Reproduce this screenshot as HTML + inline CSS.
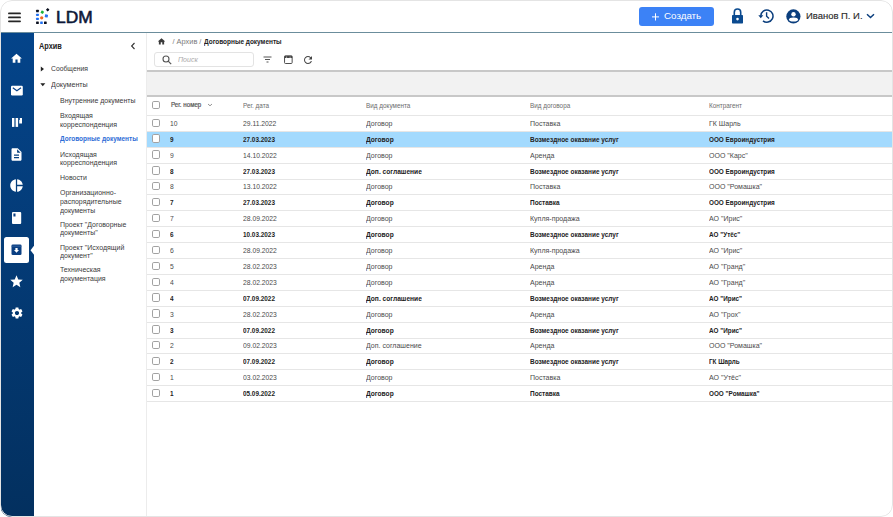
<!DOCTYPE html>
<html><head><meta charset="utf-8">
<style>
*{box-sizing:border-box;margin:0;padding:0}
html,body{width:893px;height:517px;overflow:hidden;background:#fff;font-family:"Liberation Sans",sans-serif;color:#222}
.frame{position:absolute;left:0;top:0;width:893px;height:517px;border-radius:12px;overflow:hidden;background:#fff}
.fb{position:absolute;left:0;top:0;width:893px;height:517px;border:1px solid #e4e4e4;border-radius:12px;pointer-events:none}
.abs{position:absolute;white-space:nowrap}
.hdr{position:absolute;left:0;top:0;width:893px;height:33px;border-bottom:1px solid #6b8d9c;background:#fff}
.side{position:absolute;left:1px;top:33px;width:32.5px;height:484px;background:linear-gradient(#04448a,#03305f)}
.panel{position:absolute;left:33.5px;top:33px;width:113.5px;height:484px;border-right:1px solid #ececec;background:#fff}
.t{position:absolute;white-space:nowrap;font-size:8px;line-height:8.7px;color:#3a3a3a;transform-origin:0 0;transform:scaleX(.87)}
.grayband{position:absolute;left:147px;top:69.8px;width:746px;height:26.8px;background:#f2f2f2;border-top:2px solid #c8c8c8;border-bottom:2.2px solid #c8c8c8}
.row{position:absolute;left:147px;width:746px;height:15.9px;border-top:1px solid #e6e6e6}
.row.last{height:16.9px;border-bottom:1px solid #e6e6e6}
.row.sel{background:#a3dafe}
.cb{position:absolute;left:4.5px;top:2.7px;width:8.3px;height:8.3px;border:1.15px solid #a2a2a2;border-radius:1.8px;background:#fff}
.c{position:absolute;top:-0.1px;line-height:16px;font-size:7.6px;color:#4a4a4a;white-space:nowrap;transform-origin:0 0;transform:scaleX(.89)}
.c1{left:23px}.c2{left:96px}.c3{left:219px}.c4{left:383px}.c5{left:562px}
.c3,.c4,.c5{transform:scaleX(.925)}
.b .c{font-weight:bold;color:#222;transform:scaleX(.84)}
.b .c3{transform:scaleX(.875)}.b .c4{transform:scaleX(.85)}.b .c5{transform:scaleX(.835)}
.hc{position:absolute;top:0;line-height:19px;font-size:7px;color:#6c6c6c;white-space:nowrap;transform-origin:0 0;transform:scaleX(.91)}
.ic{position:absolute}
</style></head><body>
<div class="frame">
 <div class="hdr">
  <svg class="ic" style="left:0;top:0" width="30" height="30" viewBox="0 0 30 30"><path d="M8.9 13.4h11.2M8.9 17.4h11.2M8.9 21.3h11.2" stroke="#262626" stroke-width="1.7" stroke-linecap="round"/></svg>
  <svg class="ic" style="left:33px;top:6px" width="20" height="20" viewBox="0 0 20 20">
   <rect x="3.1" y="3.7" width="2.7" height="2.6" rx="0.5" fill="#0a0f1e"/>
   <rect x="3.1" y="7.7" width="2.7" height="2.4" rx="0.5" fill="#1f6ff2"/>
   <rect x="3.1" y="11.8" width="2.7" height="2.3" rx="0.5" fill="#1f6ff2"/>
   <rect x="3.1" y="15.5" width="2.7" height="2.5" rx="0.5" fill="#0a0f1e"/>
   <rect x="7.2" y="15.5" width="2.6" height="2.5" rx="0.5" fill="#1f6ff2"/>
   <rect x="11" y="15.5" width="2.7" height="2.5" rx="0.5" fill="#0a0f1e"/>
   <rect x="7.9" y="4.8" width="2.8" height="2.8" rx="0.6" fill="#1db33a" transform="rotate(30 9.3 6.2)"/>
   <circle cx="8.7" cy="11.8" r="1.65" fill="#f26a21"/>
   <rect x="11.9" y="8.4" width="3" height="3" rx="0.5" fill="#2a72f0" transform="rotate(12 13.4 9.9)"/>
   <rect x="13.4" y="2.4" width="2.6" height="2.6" rx="0.4" fill="#0a0f1e" transform="rotate(45 14.7 3.7)"/>
  </svg>
  <div class="abs" style="left:55.6px;top:7.3px;font-size:16.2px;line-height:20px;color:#0d1838;-webkit-text-stroke:0.55px #0d1838;transform-origin:0 0;transform:scaleX(1.07)">LDM</div>
  <div class="abs" style="left:639px;top:7px;width:75px;height:18.5px;background:#3c82f6;border-radius:3px"></div>
  <svg class="ic" style="left:651px;top:13px" width="9" height="8" viewBox="0 0 9 8"><path d="M4.5 0.3v7.2M1 3.9h7" stroke="#fff" stroke-width="1"/></svg>
  <div class="abs" style="left:664.3px;top:9.8px;font-size:9.7px;line-height:12px;color:#fff;transform-origin:0 0;transform:scaleX(1.01)">Создать</div>
  <svg class="ic" style="left:731px;top:7px" width="13" height="17" viewBox="0 0 13 17">
   <path d="M3.3 8.3V5.2a3.2 3.2 0 0 1 6.4 0v3.1" fill="none" stroke="#0b4a8f" stroke-width="1.6"/>
   <rect x="1" y="8" width="11" height="8.5" rx="0.7" fill="#0b4a8f"/>
   <circle cx="6.5" cy="12.1" r="1.3" fill="#fff"/>
  </svg>
  <svg class="ic" style="left:757px;top:7px" width="18" height="17" viewBox="0 0 18 17">
   <path d="M3.8 8.8A6.1 6.1 0 1 1 6 13.8" fill="none" stroke="#0b3e7d" stroke-width="1.5"/>
   <path d="M1.3 8.3h5l-2.5 3z" fill="#0b3e7d"/>
   <path d="M9.6 5.3v4l2.4 2.3" fill="none" stroke="#0b3e7d" stroke-width="1.4"/>
  </svg>
  <svg class="ic" style="left:786.2px;top:8.6px" width="15" height="15" viewBox="0 0 15 15">
   <circle cx="7.4" cy="7.4" r="7.1" fill="#0b3e7d"/>
   <circle cx="7.5" cy="5.3" r="2.2" fill="#fff"/>
   <ellipse cx="7.5" cy="10.6" rx="4.5" ry="2" fill="#fff"/>
  </svg>
  <div class="abs" style="left:806px;top:10px;font-size:9.7px;line-height:12px;color:#2a2a2a;-webkit-text-stroke:0.15px #2a2a2a;transform-origin:0 0;transform:scaleX(.975)">Иванов П. И.</div>
  <svg class="ic" style="left:866px;top:13px" width="9" height="6" viewBox="0 0 9 6"><path d="M1 1.2l3.5 3.3 3.5-3.3" fill="none" stroke="#0b3e7d" stroke-width="1.5"/></svg>
 </div>

 <div class="side"></div>
 <!-- sidebar icons -->
 <svg class="ic" style="left:10px;top:52px" width="13" height="13" viewBox="0 0 24 24"><path d="M10 20v-6h4v6h5v-8h3L12 3 2 12h3v8z" fill="#fff"/></svg>
 <svg class="ic" style="left:10px;top:84px" width="14" height="13" viewBox="0 0 14 13"><rect x="1" y="1.7" width="11.8" height="9.7" rx="1.2" fill="#fff"/><path d="M2.8 3.7l4.1 3 4.1-3" fill="none" stroke="#0a428a" stroke-width="1.2"/></svg>
 <svg class="ic" style="left:6px;top:112px" width="22" height="22" viewBox="0 0 22 22"><rect x="6" y="6" width="2.4" height="8.9" fill="#fff"/><rect x="9.6" y="6" width="2.5" height="8.9" fill="#fff"/><rect x="13.2" y="6" width="2.8" height="5.5" fill="#fff"/><rect x="13.2" y="6" width="0.8" height="2" fill="#0a428a"/></svg>
 <svg class="ic" style="left:9px;top:147px" width="15" height="15" viewBox="0 0 24 24"><path d="M14 2H6c-1.1 0-2 .9-2 2v16c0 1.1.9 2 2 2h12c1.1 0 2-.9 2-2V8l-6-6zm2 16H8v-2h8v2zm0-4H8v-2h8v2zm-3-5V3.5L18.5 9H13z" fill="#fff"/></svg>
 <svg class="ic" style="left:9px;top:178px" width="15" height="15" viewBox="0 0 24 24"><path d="M11 2v20c-5.07-.5-9-4.79-9-10s3.93-9.5 9-10zm2.03 0v8.99H22c-.47-4.74-4.24-8.52-8.97-8.99zm0 11.01V22c4.74-.47 8.5-4.25 8.97-8.99h-8.97z" fill="#fff"/></svg>
 <svg class="ic" style="left:11px;top:211px" width="12" height="14" viewBox="0 0 12 14"><rect x="1" y="1" width="9.2" height="12" rx="1" fill="#fff"/><rect x="2.4" y="2.5" width="2.1" height="3" fill="#0a3f82"/></svg>
 <div class="abs" style="left:4px;top:237px;width:25.2px;height:25.8px;background:#fff;border-radius:2.5px"></div>
 <svg class="ic" style="left:29.5px;top:244.5px" width="4.5" height="10.5" viewBox="0 0 4.5 10.5"><path d="M4.5 0L0.5 5.25 4.5 10.5z" fill="#fff"/></svg>
 <svg class="ic" style="left:11px;top:244px" width="11" height="11.5" viewBox="0 0 11 11.5"><rect x="0.5" y="0.5" width="10" height="10.5" rx="1.3" fill="#0a3f82"/><path d="M0.5 2.2h10" stroke="#3d6aa6" stroke-width="0.8"/><path d="M3 6h5l-2.5 2.7z M4.4 4h2.2v2.3H4.4z" fill="#fff"/></svg>
 <svg class="ic" style="left:9px;top:274px" width="15" height="15" viewBox="0 0 24 24"><path d="M12 17.27L18.18 21l-1.64-7.03L22 9.24l-7.19-.61L12 2 9.19 8.63 2 9.24l5.46 4.73L5.82 21z" fill="#fff"/></svg>
 <svg class="ic" style="left:9.5px;top:306px" width="14" height="14" viewBox="0 0 24 24"><path d="M19.14 12.94c.04-.3.06-.61.06-.94 0-.32-.02-.64-.07-.94l2.03-1.58c.18-.14.23-.41.12-.61l-1.92-3.32c-.12-.22-.37-.29-.59-.22l-2.39.96c-.5-.38-1.03-.7-1.62-.94l-.36-2.54c-.04-.24-.24-.41-.48-.41h-3.84c-.24 0-.43.17-.47.41l-.36 2.54c-.59.24-1.13.57-1.62.94l-2.39-.96c-.22-.08-.47 0-.59.22L2.74 8.87c-.12.21-.08.47.12.61l2.03 1.58c-.05.3-.09.63-.09.94s.02.64.07.94l-2.03 1.58c-.18.14-.23.41-.12.61l1.92 3.32c.12.22.37.29.59.22l2.39-.96c.5.38 1.03.7 1.62.94l.36 2.54c.05.24.24.41.48.41h3.84c.24 0 .44-.17.47-.41l.36-2.54c.59-.24 1.13-.56 1.62-.94l2.39.96c.22.08.47 0 .59-.22l1.92-3.32c.12-.22.07-.47-.12-.61l-2.01-1.58zM12 15.6c-1.98 0-3.6-1.62-3.6-3.6s1.62-3.6 3.6-3.6 3.6 1.62 3.6 3.6-1.62 3.6-3.6 3.6z" fill="#fff"/></svg>

 <div class="panel"></div>
 <div class="t" style="left:39.3px;top:41.9px;font-size:8.4px;font-weight:bold;color:#222;transform:scaleX(.88)">Архив</div>
 <svg class="ic" style="left:130px;top:42px" width="6" height="8" viewBox="0 0 6 8"><path d="M4.5 1L1.6 4l2.9 3" fill="none" stroke="#333" stroke-width="1.1"/></svg>
 <svg class="ic" style="left:40px;top:66px" width="5" height="6" viewBox="0 0 5 6"><path d="M0.8 0.5L4 3 0.8 5.5z" fill="#222"/></svg>
 <div class="t" style="left:51px;top:64.8px;transform:scaleX(.85)">Сообщения</div>
 <svg class="ic" style="left:40px;top:83px" width="6" height="4" viewBox="0 0 6 4"><path d="M0.3 0.3h5L2.8 3.3z" fill="#222"/></svg>
 <div class="t" style="left:51px;top:80.7px;transform:scaleX(.89)">Документы</div>
 <div class="t" style="left:60px;top:97.2px">Внутренние документы</div>
 <div class="t" style="left:60px;top:112.1px">Входящая<br>корреспонденция</div>
 <div class="t" style="left:60px;top:135.4px;color:#2d6dd6;font-weight:bold;transform:scaleX(.81)">Договорные документы</div>
 <div class="t" style="left:60px;top:150.7px">Исходящая<br>корреспонденция</div>
 <div class="t" style="left:60px;top:174.3px">Новости</div>
 <div class="t" style="left:60px;top:189.1px">Организационно-<br>распорядительные<br>документы</div>
 <div class="t" style="left:60px;top:220.7px">Проект "Договорные<br>документы"</div>
 <div class="t" style="left:60px;top:243.7px">Проект "Исходящий<br>документ"</div>
 <div class="t" style="left:60px;top:266.4px">Техническая<br>документация</div>

 <svg class="ic" style="left:156.9px;top:37px" width="9" height="8" viewBox="0 0 24 21"><path d="M10 20v-6h4v6h5v-8h3L12 3 2 12h3v8z" fill="#3a3a3a"/></svg>
 <div class="t" style="left:172.5px;top:37.9px;font-size:7.4px;color:#7a7a7a;transform:scaleX(1.0)">/ Архив /</div>
 <div class="t" style="left:204.2px;top:37.7px;font-size:7.4px;color:#222;font-weight:bold;transform:scaleX(.875)">Договорные документы</div>

 <div class="abs" style="left:154.2px;top:51.6px;width:100.2px;height:15.8px;border:1px solid #e3e3e3;border-radius:3px"></div>
 <svg class="ic" style="left:162px;top:54.6px" width="10" height="10" viewBox="0 0 10 10"><circle cx="4" cy="4" r="3" fill="none" stroke="#555" stroke-width="1.1"/><path d="M6.2 6.2l3 3" stroke="#555" stroke-width="1.2"/></svg>
 <div class="t" style="left:178px;top:55.8px;font-style:italic;color:#aaa;font-size:7.5px;transform:scaleX(.94)">Поиск</div>
 <svg class="ic" style="left:263px;top:56px" width="9" height="7" viewBox="0 0 9 7"><path d="M0.5 1h8M2 3.5h5M3.5 6h2" stroke="#555" stroke-width="1"/></svg>
 <svg class="ic" style="left:283.5px;top:55px" width="9" height="9" viewBox="0 0 9 9"><rect x="0.55" y="0.9" width="7.6" height="7.6" rx="0.9" fill="none" stroke="#444" stroke-width="0.95"/><rect x="0.5" y="0.8" width="7.7" height="2.2" fill="#444"/><path d="M2.6 1.5v1.5M6.1 1.5v1.5" stroke="#fff" stroke-width="0.5"/></svg>
 <svg class="ic" style="left:302.1px;top:53.6px" width="12" height="12" viewBox="0 0 24 24"><path d="M17.65 6.35C16.2 4.9 14.21 4 12 4c-4.42 0-7.99 3.58-7.99 8s3.57 8 7.99 8c3.73 0 6.84-2.55 7.73-6h-2.08c-.82 2.33-3.04 4-5.65 4-3.31 0-6-2.69-6-6s2.69-6 6-6c1.66 0 3.14.69 4.22 1.78L13 11h7V4l-2.35 2.35z" fill="#444"/></svg>

 <div class="grayband"></div>

 <div class="row" style="top:96px;height:18.9px;border-top:0">
  <div class="cb" style="top:4.7px"></div>
  <div class="hc" style="left:23.6px;top:-0.6px;font-size:6.4px;color:#555;-webkit-text-stroke:0.2px #555;transform:scaleX(.97)">Рег. номер</div>
  <svg class="ic" style="left:60px;top:7.4px" width="6" height="4" viewBox="0 0 6 4"><path d="M1 1L3 2.8 5 1" fill="none" stroke="#888" stroke-width="0.9"/></svg>
  <div class="hc" style="left:96px">Рег. дата</div>
  <div class="hc" style="left:219px">Вид документа</div>
  <div class="hc" style="left:383px">Вид договора</div>
  <div class="hc" style="left:562px">Контрагент</div>
 </div>
 <div class="row" style="top:114.9px"><div class="cb"></div><div class="c c1">10</div><div class="c c2">29.11.2022</div><div class="c c3">Договор</div><div class="c c4">Поставка</div><div class="c c5">ГК Шарль</div></div>
 <div class="row sel b" style="top:130.8px"><div class="cb"></div><div class="c c1">9</div><div class="c c2">27.03.2023</div><div class="c c3">Договор</div><div class="c c4">Возмездное оказание услуг</div><div class="c c5">ООО Евроиндустрия</div></div>
 <div class="row" style="top:146.7px"><div class="cb"></div><div class="c c1">9</div><div class="c c2">14.10.2022</div><div class="c c3">Договор</div><div class="c c4">Аренда</div><div class="c c5">ООО &quot;Карс&quot;</div></div>
 <div class="row b" style="top:162.6px"><div class="cb"></div><div class="c c1">8</div><div class="c c2">27.03.2023</div><div class="c c3">Доп. соглашение</div><div class="c c4">Возмездное оказание услуг</div><div class="c c5">ООО Евроиндустрия</div></div>
 <div class="row" style="top:178.5px"><div class="cb"></div><div class="c c1">8</div><div class="c c2">13.10.2022</div><div class="c c3">Договор</div><div class="c c4">Поставка</div><div class="c c5">ООО &quot;Ромашка&quot;</div></div>
 <div class="row b" style="top:194.4px"><div class="cb"></div><div class="c c1">7</div><div class="c c2">27.03.2023</div><div class="c c3">Договор</div><div class="c c4">Поставка</div><div class="c c5">ООО Евроиндустрия</div></div>
 <div class="row" style="top:210.3px"><div class="cb"></div><div class="c c1">7</div><div class="c c2">28.09.2022</div><div class="c c3">Договор</div><div class="c c4">Купля-продажа</div><div class="c c5">АО &quot;Ирис&quot;</div></div>
 <div class="row b" style="top:226.2px"><div class="cb"></div><div class="c c1">6</div><div class="c c2">10.03.2023</div><div class="c c3">Договор</div><div class="c c4">Возмездное оказание услуг</div><div class="c c5">АО &quot;Утёс&quot;</div></div>
 <div class="row" style="top:242.1px"><div class="cb"></div><div class="c c1">6</div><div class="c c2">28.09.2022</div><div class="c c3">Договор</div><div class="c c4">Купля-продажа</div><div class="c c5">АО &quot;Ирис&quot;</div></div>
 <div class="row" style="top:258.0px"><div class="cb"></div><div class="c c1">5</div><div class="c c2">28.02.2023</div><div class="c c3">Договор</div><div class="c c4">Аренда</div><div class="c c5">АО &quot;Гранд&quot;</div></div>
 <div class="row" style="top:273.9px"><div class="cb"></div><div class="c c1">4</div><div class="c c2">28.02.2023</div><div class="c c3">Договор</div><div class="c c4">Аренда</div><div class="c c5">АО &quot;Гранд&quot;</div></div>
 <div class="row b" style="top:289.8px"><div class="cb"></div><div class="c c1">4</div><div class="c c2">07.09.2022</div><div class="c c3">Доп. соглашение</div><div class="c c4">Возмездное оказание услуг</div><div class="c c5">АО &quot;Ирис&quot;</div></div>
 <div class="row" style="top:305.7px"><div class="cb"></div><div class="c c1">3</div><div class="c c2">28.02.2023</div><div class="c c3">Договор</div><div class="c c4">Аренда</div><div class="c c5">АО &quot;Грох&quot;</div></div>
 <div class="row b" style="top:321.6px"><div class="cb"></div><div class="c c1">3</div><div class="c c2">07.09.2022</div><div class="c c3">Договор</div><div class="c c4">Возмездное оказание услуг</div><div class="c c5">АО &quot;Ирис&quot;</div></div>
 <div class="row" style="top:337.5px"><div class="cb"></div><div class="c c1">2</div><div class="c c2">09.02.2023</div><div class="c c3">Доп. соглашение</div><div class="c c4">Аренда</div><div class="c c5">ООО &quot;Ромашка&quot;</div></div>
 <div class="row b" style="top:353.4px"><div class="cb"></div><div class="c c1">2</div><div class="c c2">07.09.2022</div><div class="c c3">Договор</div><div class="c c4">Возмездное оказание услуг</div><div class="c c5">ГК Шарль</div></div>
 <div class="row" style="top:369.3px"><div class="cb"></div><div class="c c1">1</div><div class="c c2">03.02.2023</div><div class="c c3">Договор</div><div class="c c4">Поставка</div><div class="c c5">АО &quot;Утёс&quot;</div></div>
 <div class="row last b" style="top:385.2px"><div class="cb"></div><div class="c c1">1</div><div class="c c2">05.09.2022</div><div class="c c3">Договор</div><div class="c c4">Поставка</div><div class="c c5">ООО &quot;Ромашка&quot;</div></div>
 <div class="fb"></div>
</div>
</body></html>
